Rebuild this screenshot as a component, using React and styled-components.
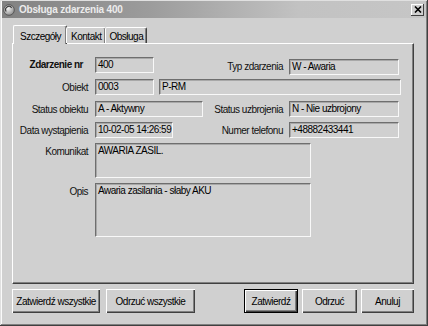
import styled, { createGlobalStyle } from "styled-components";

const GlobalStyle = createGlobalStyle`
  body {
    margin: 0;
    background: #d0d0d0;
    font-family: "Liberation Sans", Arial, sans-serif;
  }
  * { box-sizing: border-box; }
`;

const Window = styled.div`
  width: 428px;
  height: 326px;
  background: #d0d0d0;
  padding: 1px 2px 3px 2px;
  box-shadow: inset -1px -1px #404040, inset 1px 1px #e0e0e0,
    inset -2px -2px #808080, inset 2px 2px #fafafa;
  display: flex;
  flex-direction: column;
`;

const TitleBar = styled.div`
  height: 17px;
  display: flex;
  align-items: center;
  gap: 4px;
  padding: 0 2px 0 1px;
  background: linear-gradient(to right, #828282 0%, #9c9c9c 35%, #c2c2c2 70%, #c6c6c6 100%);
`;

const Title = styled.span`
  flex: 1;
  color: #ececec;
  font-weight: bold;
  font-size: 10px;
  letter-spacing: -0.2px;
`;

const CloseButton = styled.div`
  width: 13px;
  height: 12px;
  background: #d0d0d0;
  box-shadow: inset -1px -1px #404040, inset 1px 1px #ffffff;
  display: flex;
  align-items: center;
  justify-content: center;
`;

const Body = styled.div`
  padding: 6px 12px 0 10px;
  display: flex;
  flex-direction: column;
`;

const TabRow = styled.div`
  display: flex;
  align-items: flex-end;
  height: 19px;
  padding-left: 1px;
  position: relative;
  z-index: 1;
`;

const Tab = styled.div`
  height: ${(p) => (p.$active ? "19px" : "16px")};
  margin-bottom: ${(p) => (p.$active ? "-1px" : "0")};
  padding: ${(p) => (p.$active ? "2px 5px 0 6px" : "1px 3px 0 4px")};
  margin-left: ${(p) => (p.$active ? "0" : "-1px")};
  background: #d0d0d0;
  font-size: 10px;
  letter-spacing: -0.5px;
  color: #000;
  display: flex;
  align-items: center;
  white-space: nowrap;
  border-top: 1px solid #fff;
  border-left: 1px solid #fff;
  border-right: 1px solid #404040;
  box-shadow: inset -1px 0 #808080;
  border-radius: 2px 2px 0 0;
`;

const Panel = styled.div`
  height: 241px;
  border-top: 1px solid #fff;
  border-left: 1px solid #fff;
  box-shadow: inset -1px -1px #808080;
  border-right: 1px solid #404040;
  border-bottom: 1px solid #404040;
  padding: 13px 0 0 0;
  display: flex;
  flex-direction: column;
  gap: 5px;
`;

const Row = styled.div`
  display: flex;
  align-items: ${(p) => (p.$top ? "flex-start" : "center")};
  margin-top: ${(p) => p.$shift || 0}px;
`;

const Label = styled.span`
  width: ${(p) => p.$w}px;
  flex: ${(p) => (p.$grow ? 1 : "none")};
  text-align: right;
  padding-right: ${(p) => p.$pad ?? 7}px;
  padding-top: ${(p) => p.$pt || 0}px;
  font-size: 10px;
  font-weight: ${(p) => (p.$bold ? "bold" : "normal")};
  letter-spacing: -0.5px;
  color: #111;
  white-space: nowrap;
`;

const Field = styled.div`
  width: ${(p) => p.$w}px;
  height: ${(p) => p.$h || 16}px;
  margin: ${(p) => `${p.$mt || 0}px ${p.$mr || 0}px 0 ${p.$ml || 0}px`};
  border-style: solid;
  border-width: 1px;
  border-color: #6e6e6e #f8f8f8 #f8f8f8 #6e6e6e;
  box-shadow: inset 1px 1px #a8a8a8;
  background: #d0d0d0;
  font-size: 10px;
  letter-spacing: -0.5px;
  color: #000;
  padding: 1px 0 0 2px;
  line-height: 12px;
  white-space: nowrap;
  overflow: hidden;
`;

const Spacer = styled.div`
  flex: 1;
`;

const ButtonRow = styled.div`
  display: flex;
  align-items: center;
  margin-top: 5px;
`;

const Button = styled.div`
  width: ${(p) => p.$w}px;
  height: 24px;
  margin-left: ${(p) => p.$ml || 0}px;
  display: flex;
  align-items: center;
  justify-content: center;
  white-space: nowrap;
  font-size: 10px;
  letter-spacing: -0.5px;
  color: #000;
  background: #d0d0d0;
  border: ${(p) => (p.$default ? "1px solid #000" : "none")};
  box-shadow: inset 1px 1px #fff, inset -1px -1px #404040, inset -2px -2px #808080;
`;

function AppIcon() {
  return (
    <svg width="12" height="12" viewBox="0 0 12 12">
      <defs>
        <radialGradient id="ig" cx="0.4" cy="0.35" r="0.7">
          <stop offset="0" stopColor="#f4f4f4" />
          <stop offset="1" stopColor="#8a8a8a" />
        </radialGradient>
      </defs>
      <circle cx="6" cy="6" r="5.3" fill="url(#ig)" stroke="#4a4a4a" strokeWidth="0.8" />
      <path d="M3.2 7.5 A3.2 3.2 0 0 1 8.6 3.8" fill="none" stroke="#3a3a3a" strokeWidth="1.2" />
    </svg>
  );
}

function CloseIcon() {
  return (
    <svg width="8" height="7" viewBox="0 0 8 7">
      <path d="M1 0.5 L7 6.5 M7 0.5 L1 6.5" stroke="#000" strokeWidth="1.6" />
    </svg>
  );
}

export default function App() {
  return (
    <>
      <GlobalStyle />
      <Window>
        <TitleBar>
          <AppIcon />
          <Title>Obsługa zdarzenia 400</Title>
          <CloseButton>
            <CloseIcon />
          </CloseButton>
        </TitleBar>
        <Body>
          <TabRow>
            <Tab $active>Szczegóły</Tab>
            <Tab>Kontakt</Tab>
            <Tab>Obsługa</Tab>
          </TabRow>
          <Panel>
            <Row $top>
              <Label $w={82} $bold $pad={12} $pt={2}>Zdarzenie nr</Label>
              <Field $w={59}>400</Field>
              <Label $grow $pad={6} $pt={4}>Typ zdarzenia</Label>
              <Field $w={110} $mr={14} $mt={2}>W - Awaria</Field>
            </Row>
            <Row $shift={-1}>
              <Label $w={82}>Obiekt</Label>
              <Field $w={59}>0003</Field>
              <Field $w={242} $ml={5}>P-RM</Field>
            </Row>
            <Row $shift={1}>
              <Label $w={82}>Status obiektu</Label>
              <Field $w={108}>A - Aktywny</Field>
              <Label $grow $pad={6}>Status uzbrojenia</Label>
              <Field $w={110} $mr={14}>N - Nie uzbrojony</Field>
            </Row>
            <Row>
              <Label $w={82}>Data wystąpienia</Label>
              <Field $w={78}>10-02-05 14:26:59</Field>
              <Label $grow $pad={6}>Numer telefonu</Label>
              <Field $w={110} $mr={14}>+48882433441</Field>
            </Row>
            <Row $top>
              <Label $w={82} $pt={3}>Komunikat</Label>
              <Field $w={216} $h={35}>AWARIA ZASIL.</Field>
            </Row>
            <Row $top>
              <Label $w={82} $pt={3}>Opis</Label>
              <Field $w={216} $h={54}>Awaria zasilania - słaby AKU</Field>
            </Row>
          </Panel>
          <ButtonRow>
            <Button $w={88}>Zatwierdź wszystkie</Button>
            <Button $w={89} $ml={6}>Odrzuć wszystkie</Button>
            <Spacer />
            <Button $w={54} $default>Zatwierdź</Button>
            <Button $w={55} $ml={4}>Odrzuć</Button>
            <Button $w={53} $ml={4}>Anuluj</Button>
          </ButtonRow>
        </Body>
      </Window>
    </>
  );
}
